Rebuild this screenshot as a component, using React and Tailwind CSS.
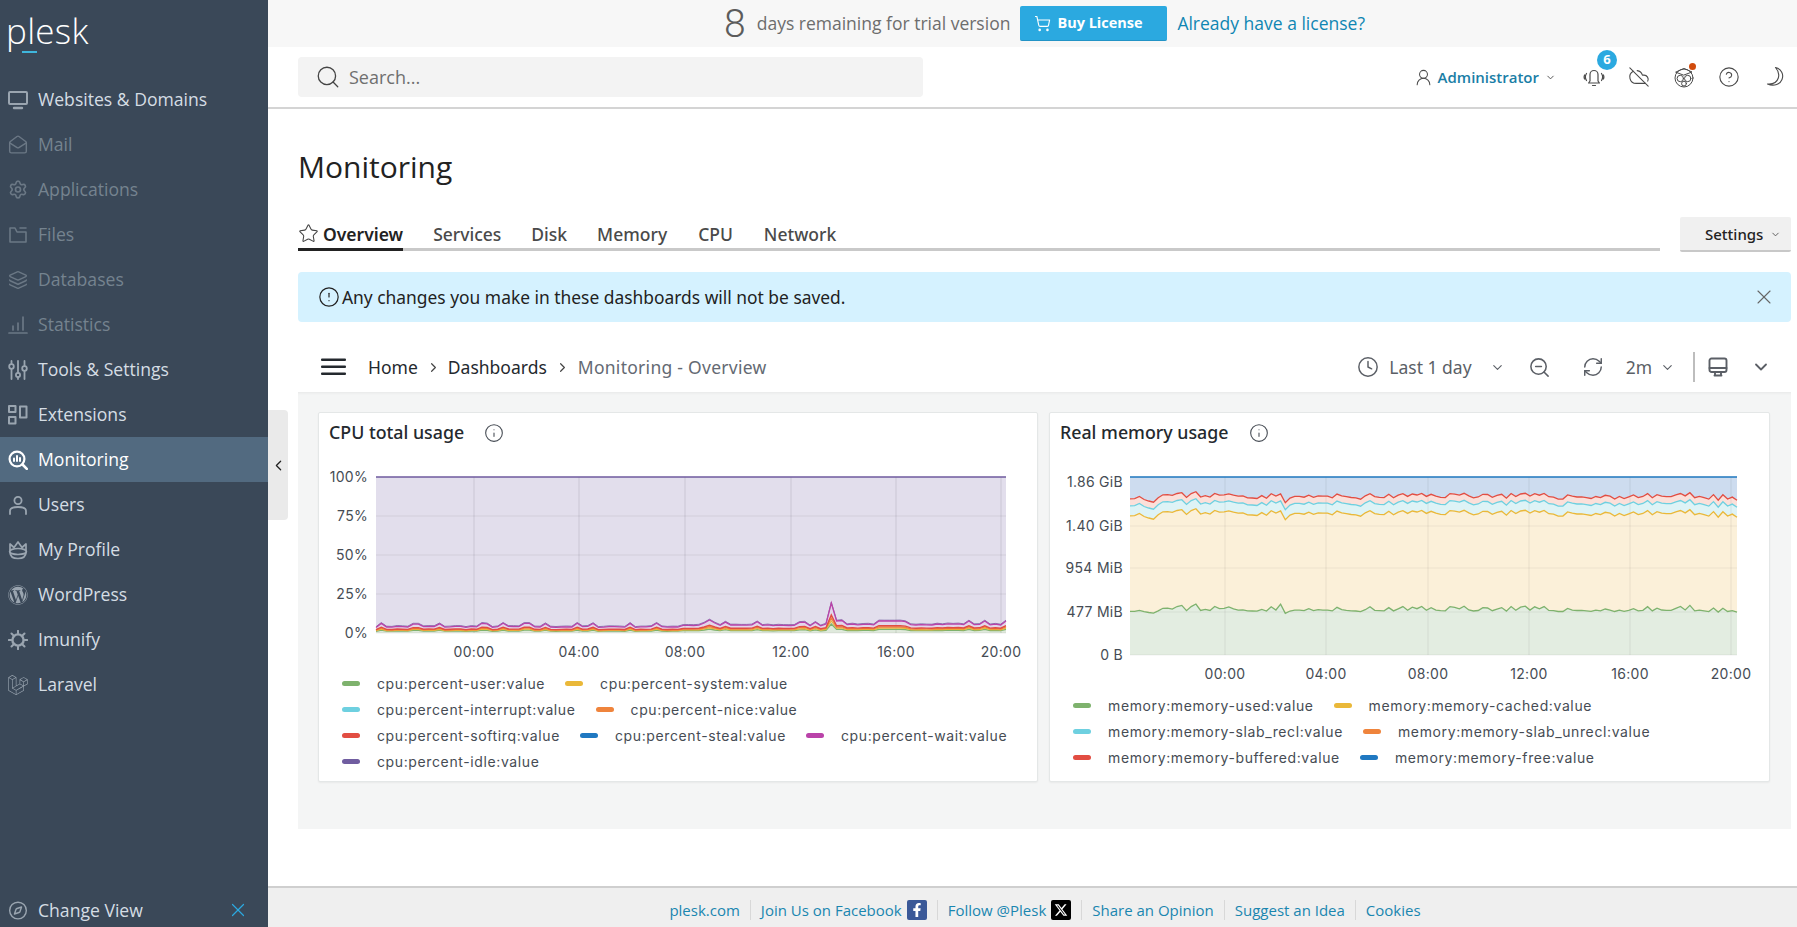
import React from "react";
import {
  MailOpen, Settings, Layers, Search, UserRound, ChevronDown, ChevronLeft, ChevronRight, X, ShoppingCart,
  CloudOff, CircleHelp, Star, CircleAlert, Clock, ZoomOut, RefreshCw, Compass, Info,
} from "lucide-react";
import { FaWordpress, FaFacebookF } from "react-icons/fa";
import { FaXTwitter } from "react-icons/fa6";
import { SiLaravel } from "react-icons/si";

const sw = { fill: "none", stroke: "currentColor", strokeLinecap: "round", strokeLinejoin: "round" };

function MonitorIcon() {
  return (
    <svg width="20" height="20" viewBox="0 0 20 20" {...sw} strokeWidth="2">
      <rect x="1" y="2" width="18" height="12" rx="1" />
      <path d="M6 18h8" strokeWidth="2.4" />
    </svg>
  );
}
function FolderIcon() {
  return (
    <svg width="20" height="20" viewBox="0 0 20 20" {...sw} strokeWidth="1.6">
      <path d="M2 3v14h16V7H9L7 3zM12 3h6" />
    </svg>
  );
}
function StatsIcon() {
  return (
    <svg width="20" height="20" viewBox="0 0 20 20" {...sw} strokeWidth="1.7">
      <path d="M1 18h18M5 15v-4M10 15V8M15 15V2" />
    </svg>
  );
}
function ToolsIcon() {
  return (
    <svg width="20" height="20" viewBox="0 0 20 20" {...sw} strokeWidth="1.8">
      <path d="M3.5 1v3M3.5 9v10M10 1v12M10 17v2M16.5 1v5M16.5 11v8" />
      <circle cx="3.5" cy="6.5" r="2.3" />
      <circle cx="10" cy="15" r="2.1" />
      <circle cx="16.5" cy="8.5" r="2.3" />
    </svg>
  );
}
function ExtensionsIcon() {
  return (
    <svg width="20" height="20" viewBox="0 0 20 20" {...sw} strokeWidth="2" strokeLinecap="butt">
      <rect x="1" y="1" width="6.5" height="6" />
      <rect x="1" y="12" width="6.5" height="6.5" />
      <rect x="12" y="1.5" width="6.5" height="11" />
    </svg>
  );
}
function MonitoringIcon() {
  return (
    <svg width="20" height="20" viewBox="0 0 20 20" {...sw} strokeWidth="2.2">
      <circle cx="9" cy="9" r="7.4" />
      <path d="M14.5 14.5l4.3 4.3" strokeWidth="2.6" />
      <path d="M6 11V8.5M9 11V6M12 11V8" strokeWidth="2" />
    </svg>
  );
}
function UserIcon() {
  return (
    <svg width="20" height="20" viewBox="0 0 20 20" {...sw} strokeWidth="1.8">
      <circle cx="10" cy="5.5" r="3.6" />
      <path d="M2 19v-3c0-2.5 2.4-4 8-4s8 1.5 8 4v3" />
    </svg>
  );
}
function CrownIcon() {
  return (
    <svg width="20" height="20" viewBox="0 0 20 20" {...sw} strokeWidth="1.7">
      <path d="M2 4l4 3.5L10 2l4 5.5L18 4v6M2 4v6" />
      <ellipse cx="10" cy="11.5" rx="8.4" ry="3" />
      <path d="M2 12c0 4 3 6.5 8 6.5s8-2.5 8-6.5" />
    </svg>
  );
}
function ImunifyIcon() {
  return (
    <svg width="20" height="20" viewBox="0 0 20 20" {...sw} strokeWidth="1.6">
      <circle cx="10" cy="10" r="5.6" strokeWidth="2.4" />
      <path d="M10 .8v2.4M10 16.8v2.4M.8 10h2.4M16.8 10h2.4M3.5 3.5l1.8 1.8M14.7 14.7l1.8 1.8M16.5 3.5l-1.8 1.8M5.3 14.7l-1.8 1.8" strokeWidth="2" />
    </svg>
  );
}

function BellIcon() {
  return (
    <svg width="22" height="22" viewBox="0 0 22 22" {...sw} strokeWidth="1.2">
      <path d="M7 15V8.5a4 4 0 0 1 8 0V15l1.4 2H5.6zM9.5 19.5h3" />
      <path d="M3.5 7.5c-1.3 2-1.3 5 0 7M1.6 9c-.6 1.2-.6 2.8 0 4M18.5 7.5c1.3 2 1.3 5 0 7M20.4 9c.6 1.2.6 2.8 0 4" />
    </svg>
  );
}
function OwlIcon() {
  return (
    <svg width="22" height="22" viewBox="0 0 22 22" {...sw} strokeWidth="1">
      <circle cx="11" cy="12" r="9" />
      <path d="M3 6l8-3.5L19 6l-8 3z" />
      <circle cx="7.3" cy="12.5" r="3.2" />
      <circle cx="14.7" cy="12.5" r="3.2" />
      <circle cx="11" cy="17.6" r="2.4" />
    </svg>
  );
}
function MoonIcon() {
  return (
    <svg width="22" height="22" viewBox="0 0 22 22" {...sw} strokeWidth="1.1">
      <path d="M12.5 1.5c6 1.5 8.5 7 6.5 12-1.8 4.4-7.6 7.4-14.5 4.5 5.5.5 9.5-2 10.8-6 1-3.2 0-7.4-2.8-10.5z" />
    </svg>
  );
}
function DashIcon() {
  return (
    <svg width="20" height="20" viewBox="0 0 20 20" {...sw} strokeWidth="1.9">
      <rect x="1.5" y="1.5" width="17" height="13.5" rx="2" />
      <path d="M1.5 11h17M6.5 18.5h7M7 15v3.5M13 15v3.5" />
    </svg>
  );
}

const navItems = [
  { label: "Websites & Domains", icon: <MonitorIcon /> },
  { label: "Mail", icon: <MailOpen size={21} strokeWidth={1.7} />, off: true },
  { label: "Applications", icon: <Settings size={21} strokeWidth={2} />, off: true },
  { label: "Files", icon: <FolderIcon />, off: true },
  { label: "Databases", icon: <Layers size={22} strokeWidth={1.7} />, off: true },
  { label: "Statistics", icon: <StatsIcon />, off: true },
  { label: "Tools & Settings", icon: <ToolsIcon /> },
  { label: "Extensions", icon: <ExtensionsIcon /> },
  { label: "Monitoring", icon: <MonitoringIcon />, active: true },
  { label: "Users", icon: <UserIcon /> },
  { label: "My Profile", icon: <CrownIcon /> },
  { label: "WordPress", icon: <FaWordpress size={20} /> },
  { label: "Imunify", icon: <ImunifyIcon /> },
  { label: "Laravel", icon: <SiLaravel size={20} /> },
];

function Sidebar() {
  return (
    <aside className="w-[268px] h-full shrink-0 flex flex-col bg-[#3a4858] font-['Open_Sans',sans-serif]">
      <div className="h-[77px] pl-[6px] pt-[9px] shrink-0">
        <div className="relative w-fit text-white text-[35px] leading-[44px] font-light tracking-[0.3px]">
          plesk
          <span className="absolute left-[16px] top-[42px] w-[15px] h-[2px] bg-[#3fb6dc]" />
        </div>
      </div>
      <nav className="flex flex-col">
        {navItems.map((it) => (
          <div
            key={it.label}
            className={
              "h-[45px] flex items-center gap-[10px] pl-[8px] text-[17.6px] " +
              (it.active ? "bg-[#526a80] text-white" : it.off ? "text-[#75838f]" : "text-[#d5dde4]")
            }
          >
            <span
              className={
                "w-[20px] flex justify-center " + (it.active ? "text-white" : it.off ? "text-[#6b7885]" : "text-[#9aa5b0]")
              }
            >
              {it.icon}
            </span>
            {it.label}
          </div>
        ))}
      </nav>
      <div className="mt-auto h-[43px] pt-[9px] flex items-center gap-[10px] pl-[8px] pr-[19px] text-[17.6px] text-[#d5dde4]">
        <span className="w-[20px] flex justify-center text-[#9aa5b0]">
          <Compass size={23} strokeWidth={1.7} />
        </span>
        Change View
        <X size={22} strokeWidth={1.3} className="ml-auto text-[#2ba9e0]" />
      </div>
    </aside>
  );
}

function TrialBanner() {
  return (
    <div className="h-[47px] shrink-0 bg-[#f7f7f7] flex items-center justify-center pl-[24px] gap-[10px] font-['Open_Sans',sans-serif] text-[17.5px]">
      <span className="text-[39px] leading-[44px] font-['Roboto',sans-serif] font-light text-[#5c5c5c] mr-[1px]">8</span>
      <span className="text-[#6d6d6d]">days remaining for trial version</span>
      <span className="h-[35px] w-[147px] rounded-[2px] bg-[#2ba9e0] border-b border-[#2393c6] text-white text-[14.5px] font-bold flex items-center pl-[14px] gap-[6px]">
        <ShoppingCart size={17} strokeWidth={1.6} />
        Buy License
      </span>
      <span className="text-[#0f86b3]">Already have a license?</span>
    </div>
  );
}

function TopBar() {
  return (
    <div className="h-[62px] shrink-0 flex items-center pl-[30px] pr-[12px] border-b-2 border-[#d4d4d4] font-['Open_Sans',sans-serif]">
      <div className="w-[625px] h-[40px] rounded-[4px] bg-[#f3f3f3] flex items-center gap-[8px] pl-[17px] text-[18px] text-[#6f6f6f]">
        <Search size={26} strokeWidth={1.2} className="text-[#444]" />
        Search...
      </div>
      <div className="ml-auto flex items-center text-[#4b4b4b]">
        <UserRound size={19} strokeWidth={1.3} />
        <span className="ml-[5px] text-[15px] font-semibold text-[#1a7ea6]">Administrator</span>
        <ChevronDown size={11} strokeWidth={2} className="ml-[6px]" />
        <span className="relative ml-[27px]">
          <BellIcon />
          <span className="absolute -top-[16px] left-[14px] w-[20px] h-[20px] rounded-full bg-[#2ba9e0] text-white text-[13px] font-bold flex items-center justify-center">
            6
          </span>
        </span>
        <span className="ml-[23px]"><CloudOff size={22} strokeWidth={1.2} /></span>
        <span className="relative ml-[23px]">
          <OwlIcon />
          <span className="absolute -top-[3px] left-[16px] w-[7px] h-[7px] rounded-full bg-[#d14b0d]" />
        </span>
        <span className="ml-[23px]"><CircleHelp size={22} strokeWidth={1.2} /></span>
        <span className="ml-[23px]"><MoonIcon /></span>
      </div>
    </div>
  );
}

function Tabs() {
  const tabs = [["Services", 30], ["Disk", 30], ["Memory", 30], ["CPU", 31], ["Network", 31]];
  return (
    <div className="flex items-start gap-[20px] font-['Noto_Sans',sans-serif]">
      <div className="w-[1362px] h-[33px] flex items-start border-b-[3px] border-[#c9c9c9] text-[17.5px] font-medium text-[#4a4a4a]">
        <div className="h-[33px] flex items-start gap-[4px] border-b-[3px] border-[#222] text-[#222] font-semibold">
          <Star size={21} strokeWidth={1.2} className="mt-[5px] text-[#444]" />
          <span className="leading-[32px]">Overview</span>
        </div>
        {tabs.map(([t, gap]) => (
          <span key={t} className="leading-[32px]" style={{ marginLeft: gap }}>
            {t}
          </span>
        ))}
      </div>
      <div className="w-[111px] h-[35px] -mt-[1px] pt-[1px] rounded-[2px] bg-[#f0f0f0] border-b-2 border-[#c8c8c8] flex items-center pl-[25px] gap-[7px] text-[15px] font-medium text-[#222]">
        Settings
        <ChevronDown size={11} strokeWidth={2} className="text-[#555]" />
      </div>
    </div>
  );
}

function Alert() {
  return (
    <div className="mt-[20px] h-[50px] rounded-[4px] bg-[#d5f2ff] flex items-center pl-[20px] pr-[15px] gap-[2px] text-[17.4px] text-[#222] font-['Noto_Sans',sans-serif]">
      <CircleAlert size={22} strokeWidth={1.3} />
      Any changes you make in these dashboards will not be saved.
      <X size={24} strokeWidth={1.1} className="ml-auto text-[#666]" />
    </div>
  );
}

function Toolbar() {
  return (
    <div className="h-[70px] pt-[20px] flex items-center pl-[23px] pr-[20px] text-[17.5px] text-[#24292e] font-['Noto_Sans',sans-serif]">
      <svg width="25" height="18" viewBox="0 0 25 18" fill="#24292e">
        <rect width="25" height="2.6" rx="1" y="0.5" />
        <rect width="25" height="2.6" rx="1" y="7.5" />
        <rect width="25" height="2.6" rx="1" y="14.5" />
      </svg>
      <span className="ml-[22px]">Home</span>
      <ChevronRight size={15} strokeWidth={1.9} className="ml-[8px] mr-[7px] text-[#444]" />
      <span>Dashboards</span>
      <ChevronRight size={15} strokeWidth={1.9} className="mx-[8px] text-[#444]" />
      <span className="text-[#646a73] tracking-[0.27px]">Monitoring - Overview</span>
      <div className="ml-auto flex items-center text-[#5b5f66]">
        <Clock size={22} strokeWidth={1.6} />
        <span className="ml-[10px]">Last 1 day</span>
        <ChevronDown size={15} strokeWidth={1.8} className="ml-[18px]" />
        <ZoomOut size={23} strokeWidth={1.6} className="ml-[23px]" />
        <RefreshCw size={22} strokeWidth={1.6} className="ml-[31px]" />
        <span className="ml-[22px]">2m</span>
        <ChevronDown size={15} strokeWidth={1.8} className="ml-[8px]" />
        <span className="ml-[18px] h-[30px] w-[2px] bg-[#bdbdbd]" />
        <span className="ml-[13px]"><DashIcon /></span>
        <ChevronDown size={20} strokeWidth={2.2} className="ml-[23px]" />
      </div>
    </div>
  );
}

// seeded noise so the graphs stay the same between runs
function makeNoise(seed, n) {
  let s = seed;
  const out = [];
  for (let i = 0; i < n; i++) {
    s = (s * 16807) % 2147483647;
    out.push(s / 2147483647);
  }
  return out;
}
const toPath = (pts) => pts.map((p, i) => (i ? "L" : "M") + p[0].toFixed(1) + " " + p[1].toFixed(1)).join(" ");
const area = (top, bottom) =>
  toPath(top) + " " + [...bottom].reverse().map((p) => "L" + p[0].toFixed(1) + " " + p[1].toFixed(1)).join(" ") + " Z";

const axisText = "font-['Inter',sans-serif] text-[14px] tracking-[0.3px] fill-[#464c54]";

function CpuChart() {
  const L = 375 - 318, R = 1005 - 318, T = 477 - 454, B = 633 - 454;
  const n = 120;
  const noise = makeNoise(7, n);
  const load = noise.map((v, i) => {
    const x = L + (i * (R - L)) / (n - 1);
    let l = 5.5 + (v > 0.75 ? v * 4.5 : v * 1.6);
    if (x > 360) l += 1.5;
    if (x > 520) l += 1;
    return l;
  });
  load[62] = 10;
  load[63] = 13;
  load[64] = 10;
  load[85] = 9;
  load[86] = 30;
  load[87] = 12;
  const line = (k, off = 0) => load.map((l, i) => [L + (i * (R - L)) / (n - 1), B - l * k - off]);
  const base = [[L, B], [R, B]];
  const xs = [473, 578, 684, 790, 895, 1000].map((v) => v - 318);
  const ys = [T, T + 39, T + 78, T + 117, B];
  const labels = ["100%", "75%", "50%", "25%", "0%"];
  return (
    <svg width="718" height="216" className="block shrink-0">
      <rect x={L} y={T} width={R - L} height={B - T} fill="#e2deec" />
      <path d={area(line(0.3), base)} fill="#dfe9dc" />
      <path d={area(line(1), line(0.55))} fill="#e3d6ea" />
      {xs.map((x) => <line key={x} x1={x} x2={x} y1={T} y2={B} stroke="#000" strokeOpacity="0.1" />)}
      {ys.map((y) => <line key={y} x1={L} x2={R} y1={y} y2={y} stroke="#000" strokeOpacity="0.07" />)}
      <line x1={L} x2={R} y1={T} y2={T} stroke="#705da0" strokeWidth="1.5" />
      <path d={toPath(line(0.3))} fill="none" stroke="#7eb26d" strokeWidth="1.3" />
      <path d={toPath(line(0.4))} fill="none" stroke="#eab839" strokeWidth="1.2" />
      <path d={toPath(line(0.5))} fill="none" stroke="#ef843c" strokeWidth="1.3" />
      <path d={toPath(line(0.6))} fill="none" stroke="#e24d42" strokeWidth="1.4" />
      <path d={toPath(line(1, 0.8))} fill="none" stroke="#705da0" strokeWidth="0.8" />
      <path d={toPath(line(1))} fill="none" stroke="#ba43a9" strokeWidth="1.3" />
      {ys.map((y, i) => (
        <text key={y} x={367 - 318} y={y + 5} textAnchor="end" className={axisText}>{labels[i]}</text>
      ))}
      {["00:00", "04:00", "08:00", "12:00", "16:00", "20:00"].map((t, i) => (
        <text key={t} x={xs[i]} y={198 + 5} textAnchor="middle" className={axisText}>{t}</text>
      ))}
    </svg>
  );
}

function MemoryChart() {
  const off = 1049, top = 454;
  const L = 1129 - off, R = 1736 - off, T = 477 - top, B = 655 - top;
  const n = 130;
  const noise = makeNoise(23, n);
  const step = (R - L) / (n - 1);
  const wob = noise.map((v, i) => {
    let w = (v - 0.5) * 5.6 + Math.sin(i / 9) * 0.8;
    if (i >= 3 && i <= 5) w -= 4;
    if (i === 14) w += 5;
    if (i === 32) w += 5;
    if (i === 33 || i === 34) w -= 4;
    if (i > 122 && i % 2) w -= 4;
    return w;
  });
  const ln = (y, k = 1) => wob.map((w, i) => [L + i * step, y - top - w * k]);
  const green = wob.map((w, i) => [L + i * step, 610 - top - (w > 0 ? w * 1.4 : w * 0.5) - (i === 32 ? 3 : 0)]);
  const yellow = ln(513), cyan = ln(503), red = ln(496);
  const freeLine = [[L, T], [R, T]];
  const base = [[L, B], [R, B]];
  const xs = [1224, 1325, 1427, 1528, 1629, 1730].map((v) => v - off);
  const ys = [T, 526 - top, 568 - top, 612 - top, B];
  const labels = ["", "1.40 GiB", "954 MiB", "477 MiB", "0 B"];
  return (
    <svg width="719" height="238" className="block shrink-0">
      <path d={area(freeLine, red)} fill="#cddcef" />
      <path d={area(red, cyan)} fill="#fbe0da" />
      <path d={area(cyan, yellow)} fill="#def3f6" />
      <path d={area(yellow, green)} fill="#fbf0d9" />
      <path d={area(green, base)} fill="#e3ede1" />
      {xs.map((x) => <line key={x} x1={x} x2={x} y1={T} y2={B} stroke="#000" strokeOpacity="0.07" />)}
      {ys.map((y) => <line key={y} x1={L} x2={R} y1={y} y2={y} stroke="#000" strokeOpacity="0.06" />)}
      <line x1={L} x2={R} y1={T} y2={T} stroke="#1f78c1" strokeWidth="1.5" />
      <path d={toPath(red)} fill="none" stroke="#e24d42" strokeWidth="1.3" />
      <path d={toPath(cyan)} fill="none" stroke="#6ed0e0" strokeWidth="1.3" />
      <path d={toPath(yellow)} fill="none" stroke="#eab839" strokeWidth="1.3" />
      <path d={toPath(green)} fill="none" stroke="#7eb26d" strokeWidth="1.3" />
      <text x={1122 - off} y={487 - top} textAnchor="end" className={axisText}>1.86 GiB</text>
      {ys.slice(1).map((y, i) => (
        <text key={y} x={1122 - off} y={y + 5} textAnchor="end" className={axisText}>{labels[i + 1]}</text>
      ))}
      {["00:00", "04:00", "08:00", "12:00", "16:00", "20:00"].map((t, i) => (
        <text key={t} x={xs[i]} y={674 - top + 5} textAnchor="middle" className={axisText}>{t}</text>
      ))}
    </svg>
  );
}

function LegendRow({ items }) {
  return (
    <div className="h-[26px] flex items-center gap-[20px] text-[14px] tracking-[0.62px] text-[#464c54]">
      {items.map(([label, color]) => (
        <span key={label} className="flex items-center gap-[17px]">
          <span className="w-[18px] h-[5px] rounded-full" style={{ background: color }} />
          {label}
        </span>
      ))}
    </div>
  );
}

function Panel({ title, chart, rows, width }) {
  return (
    <div className="flex flex-col h-[370px] rounded-[2px] bg-white border border-[#e4e7e7] shadow-[0_1px_2px_rgba(0,0,0,0.05)] font-['Inter',sans-serif]" style={{ width }}>
      <div className="h-[41px] pb-[2px] shrink-0 flex items-center pl-[10px] gap-[20px] text-[17.8px] font-medium text-[#24292e] font-['Noto_Sans',sans-serif]">
        {title}
        <Info size={20} strokeWidth={1.3} className="text-[#464c54]" />
      </div>
      {chart}
      <div className="pl-[23px]">
        {rows.map((r, i) => <LegendRow key={i} items={r} />)}
      </div>
    </div>
  );
}

const G = "#7eb26d", Y = "#eab839", C = "#6ed0e0", O = "#ef843c", Re = "#e24d42", B = "#1f78c1", P = "#ba43a9", V = "#705da0";

const cpuRows = [
  [["cpu:percent-user:value", G], ["cpu:percent-system:value", Y]],
  [["cpu:percent-interrupt:value", C], ["cpu:percent-nice:value", O]],
  [["cpu:percent-softirq:value", Re], ["cpu:percent-steal:value", B], ["cpu:percent-wait:value", P]],
  [["cpu:percent-idle:value", V]],
];
const memRows = [
  [["memory:memory-used:value", G], ["memory:memory-cached:value", Y]],
  [["memory:memory-slab_recl:value", C], ["memory:memory-slab_unrecl:value", O]],
  [["memory:memory-buffered:value", Re], ["memory:memory-free:value", B]],
];

function Footer() {
  const Sep = () => <span className="w-[1px] h-[20px] bg-[#d8d8d8] mx-[10px]" />;
  return (
    <div className="h-[41px] shrink-0 mt-auto pt-[5px] bg-[#efefef] border-t-2 border-[#cfcfcf] flex items-center justify-center pl-[25px] text-[15px] text-[#1a86b0] font-['Open_Sans',sans-serif]">
      plesk.com
      <Sep />
      Join Us on Facebook
      <span className="ml-[5px] w-[20px] h-[20px] rounded-[2px] bg-[#3b5998] text-white flex items-center justify-center">
        <FaFacebookF size={14} />
      </span>
      <Sep />
      Follow @Plesk
      <span className="ml-[5px] w-[20px] h-[20px] rounded-[2px] bg-black text-white flex items-center justify-center">
        <FaXTwitter size={14} />
      </span>
      <Sep />
      Share an Opinion
      <Sep />
      Suggest an Idea
      <Sep />
      Cookies
    </div>
  );
}

export default function App() {
  return (
    <div className="h-screen w-full flex overflow-hidden bg-white">
      <Sidebar />
      <div className="relative flex-1 min-w-0 flex flex-col">
        <TrialBanner />
        <TopBar />
        <div className="pl-[30px] pr-[6px]">
          <h1 className="h-[109px] pt-[37px] text-[30px] leading-[42px] font-normal text-[#222] font-['Open_Sans',sans-serif]">
            Monitoring
          </h1>
          <Tabs />
          <Alert />
          <Toolbar />
          <div className="bg-[#f4f5f5] shadow-[inset_0_3px_3px_-2px_rgba(0,0,0,0.06)] pt-[20px] pb-[47px] pl-[20px] pr-[20px] flex gap-[11px]">
            <Panel title="CPU total usage" chart={<CpuChart />} rows={cpuRows} width={720} />
            <Panel title="Real memory usage" chart={<MemoryChart />} rows={memRows} width={721} />
          </div>
        </div>
        <Footer />
        <div className="absolute left-0 top-[410px] w-[20px] h-[110px] rounded-r-[4px] bg-[#eaeaea] flex items-center justify-center text-[#222]">
          <ChevronLeft size={17} strokeWidth={1.8} />
        </div>
      </div>
    </div>
  );
}
